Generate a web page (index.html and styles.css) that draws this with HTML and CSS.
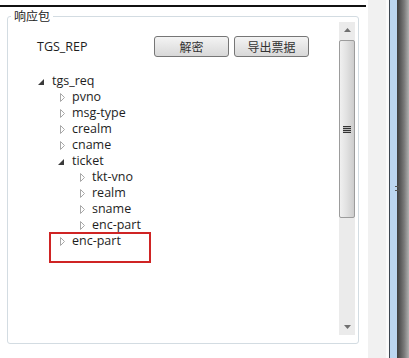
FILE: index.html
```html
<!DOCTYPE html>
<html>
<head>
<meta charset="utf-8" />
<title>响应包</title>
<link rel="stylesheet" href="styles.css">
</head>
<body>
	<div class="pane">
		<div class="topline"></div>
		<fieldset class="group">
			<legend>响应包</legend>
			<div class="inner">
				<div class="content">
					<div class="head">
						<span class="name">TGS_REP</span>
						<button class="btn first">解密</button>
						<button class="btn">导出票据</button>
					</div>
					<ul class="tree">
						<li class="row l1 open"><span class="tw"><svg width="6" height="6"><polygon points="6,0 6,6 0,6" fill="#3a3a3a"/></svg></span>tgs_req</li>
						<li class="row l2"><span class="tw"><svg width="5" height="9"><polygon points="0.5,0.5 4.5,4.5 0.5,8.5" fill="none" stroke="#a8a8a8"/></svg></span>pvno</li>
						<li class="row l2"><span class="tw"><svg width="5" height="9"><polygon points="0.5,0.5 4.5,4.5 0.5,8.5" fill="none" stroke="#a8a8a8"/></svg></span>msg-type</li>
						<li class="row l2"><span class="tw"><svg width="5" height="9"><polygon points="0.5,0.5 4.5,4.5 0.5,8.5" fill="none" stroke="#a8a8a8"/></svg></span>crealm</li>
						<li class="row l2"><span class="tw"><svg width="5" height="9"><polygon points="0.5,0.5 4.5,4.5 0.5,8.5" fill="none" stroke="#a8a8a8"/></svg></span>cname</li>
						<li class="row l2 open"><span class="tw"><svg width="6" height="6"><polygon points="6,0 6,6 0,6" fill="#3a3a3a"/></svg></span>ticket</li>
						<li class="row l3"><span class="tw"><svg width="5" height="9"><polygon points="0.5,0.5 4.5,4.5 0.5,8.5" fill="none" stroke="#a8a8a8"/></svg></span>tkt-vno</li>
						<li class="row l3"><span class="tw"><svg width="5" height="9"><polygon points="0.5,0.5 4.5,4.5 0.5,8.5" fill="none" stroke="#a8a8a8"/></svg></span>realm</li>
						<li class="row l3"><span class="tw"><svg width="5" height="9"><polygon points="0.5,0.5 4.5,4.5 0.5,8.5" fill="none" stroke="#a8a8a8"/></svg></span>sname</li>
						<li class="row l3"><span class="tw"><svg width="5" height="9"><polygon points="0.5,0.5 4.5,4.5 0.5,8.5" fill="none" stroke="#a8a8a8"/></svg></span>enc-part</li>
						<li class="row l2"><span class="tw"><svg width="5" height="9"><polygon points="0.5,0.5 4.5,4.5 0.5,8.5" fill="none" stroke="#a8a8a8"/></svg></span>enc-part</li>
						<li class="mark"></li>
					</ul>
				</div>
				<div class="vscroll">
					<div class="sbtn"><svg width="7" height="4"><polygon points="3.5,0 7,4 0,4" fill="#707070"/></svg></div>
					<div class="thumb"><span class="grip"></span></div>
					<div class="track"></div>
					<div class="sbtn"><svg width="7" height="4"><polygon points="0,0 7,0 3.5,4" fill="#707070"/></svg></div>
				</div>
			</div>
		</fieldset>
	</div>
	<div class="gap"></div>
	<div class="side"></div>
	<div class="gap2"></div>
	<div class="edge"></div>
	<div class="blue"><span class="tick"></span></div>
	<div class="shade"></div>
</body>
</html>
```

FILE: styles.css
```css
html,body{margin:0;padding:0;}
body{
	width:409px;height:358px;overflow:hidden;
	display:flex;background:#fff;
	font-family:"Open Sans","Noto Sans CJK SC",sans-serif;
	font-size:12.5px;color:#1e1e1e;
}
.pane{width:366px;flex:none;}
.topline{margin-top:5px;height:2px;background:#111;}
.group{
	margin:2px 0 0 7px;padding:0 3px 8px 0;
	width:352px;height:335px;box-sizing:border-box;
	border:1px solid #d3dce2;border-radius:3px;
	min-inline-size:0;
}
.group legend{
	margin-left:3px;padding:0 3px;
	font-size:12px;line-height:14px;color:#222;
	font-family:"Noto Sans CJK SC",sans-serif;
}
.inner{display:flex;height:100%;}
.content{flex:1;position:relative;}
.head{display:flex;align-items:center;height:21px;margin-top:13px;}
.name{margin-left:29px;width:117px;}
.btn{
	width:75px;height:21px;padding:0;margin-right:5px;
	border:1px solid #767676;border-radius:3px;
	background:linear-gradient(#f4f4f4,#e6e6e6 50%,#d8d8d8);
	font-family:"Noto Sans CJK SC",sans-serif;font-size:12px;color:#333;
}
.tree{list-style:none;margin:16px 0 0;padding:0;}
.row{height:16px;line-height:16px;display:flex;align-items:center;white-space:nowrap;}
.tw{width:15px;height:16px;flex:none;display:flex;align-items:center;}
.tw svg{margin-left:3px;}
.open .tw svg{margin-left:1px;margin-top:1px;}
.l1{padding-left:29px;}
.l2{padding-left:49px;}
.l3{padding-left:69px;}
.mark{
	position:absolute;left:41px;top:209px;
	width:98px;height:27px;
	border:2px solid #cf2424;
}
.vscroll{width:16px;flex:none;display:flex;flex-direction:column;background:#ebebeb;margin-top:-1px;}
.sbtn{height:16px;display:flex;align-items:center;justify-content:center;}
.thumb{
	margin-top:2px;height:176px;
	border:1px solid #9c9c9c;border-radius:2px;
	background:linear-gradient(90deg,#f0f0f0,#e2e2e2 45%,#cdcdcd);
	display:flex;align-items:center;justify-content:center;
}
.grip{
	width:8px;height:7px;
	background:repeating-linear-gradient(#333 0 1px,#bbb 1px 2px);
}
.track{flex:1;}
.gap{width:2px;flex:none;}
.side{width:18px;flex:none;background:#f1f1f1;}
.gap2{width:3px;flex:none;background:#fafafa;}
.edge{width:1px;flex:none;background:#3c4650;}
.blue{width:7px;flex:none;background:#bcd6f0;position:relative;}
.tick{position:absolute;left:5px;top:186px;width:4px;height:5px;
	border-top:1px solid #555;border-bottom:1px solid #555;box-sizing:border-box;}
.shade{flex:1;background:linear-gradient(90deg,#3e3e3e,#7a7a7a 60%,#b0b0b0);}
```
